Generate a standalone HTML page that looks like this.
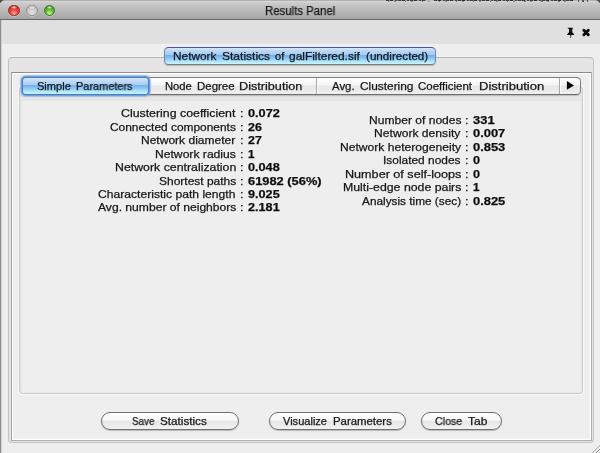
<!DOCTYPE html>
<html><head><meta charset="utf-8"><title>Results Panel</title>
<style>
html,body{margin:0;padding:0;}
body{width:600px;height:453px;position:relative;overflow:hidden;background:#eeeeee;font-family:"Liberation Sans",sans-serif;font-size:11px;color:#111;}
.a{position:absolute;}
.t{position:absolute;height:20px;line-height:20px;white-space:nowrap;transform-origin:0 0;will-change:transform;color:#151515;-webkit-text-stroke:0.25px #1a1a1a;}
.b{font-weight:bold;color:#0a0a0a;}
#bg0{left:0;top:0;width:600px;height:3px;background:#4a4a4a;}
#dash{left:386px;top:0;width:188px;height:1.3px;background:repeating-linear-gradient(90deg,#3c3c3c 0,#3c3c3c 3px,#8a8a8a 3px,#8a8a8a 4px,#2e2e2e 4px,#2e2e2e 7.5px,#a0a0a0 7.5px,#a0a0a0 9px,#444 9px,#444 11px,#909090 11px,#909090 12px);}
#dash2{left:388px;top:1.2px;width:184px;height:1px;background:repeating-linear-gradient(90deg,rgba(40,40,40,0.55) 0,rgba(40,40,40,0.55) 1.5px,transparent 1.5px,transparent 6px,rgba(40,40,40,0.4) 6px,rgba(40,40,40,0.4) 8px,transparent 8px,transparent 17px);}
#dots{left:578px;top:0;width:12px;height:1.5px;background:repeating-linear-gradient(90deg,#555 0,#555 1.5px,transparent 1.5px,transparent 4.5px);}
#dashgap{left:426px;top:0;width:8px;height:1.3px;background:#bcbcbc;}
#title{left:0;top:0;width:600px;height:20px;box-sizing:border-box;border-radius:5px 5px 0 0;background:linear-gradient(#d8d8d8 0%,#cccccc 10%,#c2c2c2 30%,#b0b0b0 72%,#a6a6a6 100%);border-bottom:1px solid #686868;border-top:1px solid #b2b2b2;}
#band{left:0;top:20px;width:600px;height:24px;background:#e0e0e0;}
#edgeL{left:0;top:20px;width:1px;height:433px;background:#8e8e8e;}
#edgeL2{left:1px;top:20px;width:1px;height:433px;background:#d0d0d0;}
.light{position:absolute;top:4.7px;width:11.7px;height:11.7px;border-radius:50%;box-sizing:border-box;box-shadow:0 0.5px 0.5px rgba(255,255,255,0.5);}
#outer{left:7.8px;top:57.2px;width:586px;height:386.1px;border:1px solid #c4c4c4;border-top:1.8px solid #b4b4b4;border-radius:4px;box-sizing:border-box;background:#e5e5e5;box-shadow:0 -0.8px 0 rgba(255,255,255,0.5);}
#second{left:10.6px;top:72px;width:581.8px;height:368.9px;border:1.1px solid #aeaeae;border-top-color:#8e8e8e;border-left-color:#a6a6a6;box-sizing:border-box;background:#eeeeee;box-shadow:inset 0 0 0 1.2px #fff;}
#content{left:19px;top:86px;width:564px;height:308px;border:1px solid #cbcbcb;border-radius:3.5px;box-sizing:border-box;background:#e6e6e6;box-shadow:0 0 0 1px #f8f8f8;}
#cband{left:21.7px;top:101px;width:559.3px;height:291.3px;background:#eeeeee;border-radius:1px;}
#nettitle{left:164.2px;top:47px;width:271.5px;height:18px;border:1px solid #7486a8;border-top-color:#4c52a8;border-bottom-color:#7c7c7c;border-radius:4.5px;box-sizing:border-box;background:linear-gradient(#d6e6fa 0%,#b8d4f5 22%,#a6ccf3 41%,#6eb0ec 45%,#86c2f2 62%,#b0e4fb 84%,#c8f6ff 100%);box-shadow:0 1px 1px rgba(0,0,0,0.22);}
.tab{position:absolute;top:77px;height:18px;box-sizing:border-box;border-top:1px solid #7d7d7d;border-bottom:1px solid #6e6e6e;background:linear-gradient(#ffffff 0%,#f4f4f4 45%,#e6e6e6 50%,#efefef 100%);box-shadow:0 1px 1px rgba(0,0,0,0.18);}
#tabsel{left:22.8px;top:78.2px;width:125.4px;height:15.6px;border-radius:3px;box-sizing:border-box;background:linear-gradient(#d6e6fa 0%,#bcd8f6 22%,#aacef3 41%,#72b2ec 45%,#88c4f2 62%,#b0e4fb 84%,#c4f4ff 100%);box-shadow:0 0 0 1px #467cc8,0 0 0 2px #70a0da,0 0 1px 2.6px rgba(125,168,224,0.65);}
.btn{position:absolute;top:411.5px;height:18.5px;box-sizing:border-box;border:1px solid #6f6f6f;border-radius:9.5px;background:linear-gradient(#ffffff 0%,#f6f6f6 45%,#e6e6e6 52%,#f2f2f2 100%);box-shadow:0 1px 1px rgba(0,0,0,0.22);}
</style></head><body>
<div id="bg0" class="a"></div>
<div id="band" class="a"></div>
<div id="title" class="a"></div>
<div id="dash" class="a"></div><div id="dash2" class="a"></div><div id="dots" class="a"></div><div id="dashgap" class="a"></div>
<div class="light" style="left:8.2px;background:radial-gradient(ellipse 32% 18% at 50% 16%,rgba(255,255,255,0.85) 0%,rgba(255,255,255,0) 100%),radial-gradient(circle at 50% 82%,#ffa49c 0%,#ee4640 42%,#b82620 100%);border:0.5px solid #8e2a26;"></div>
<div class="light" style="left:25.9px;background:radial-gradient(ellipse 32% 18% at 50% 16%,rgba(255,255,255,0.6) 0%,rgba(255,255,255,0) 100%),radial-gradient(circle at 50% 80%,#e2e2e2 0%,#cccccc 50%,#b0b0b0 100%);border:0.6px solid #909090;"></div>
<div class="light" style="left:43.8px;background:radial-gradient(ellipse 32% 18% at 50% 16%,rgba(255,255,255,0.85) 0%,rgba(255,255,255,0) 100%),radial-gradient(circle at 50% 82%,#ccf48c 0%,#68bc3c 42%,#33821a 100%);border:0.5px solid #3a7a22;"></div>
<div id="edgeL" class="a"></div><div id="edgeL2" class="a"></div>
<svg class="a" style="left:564px;top:26px" width="30" height="14" viewBox="0 0 30 14">
<path d="M3.8 1.7h5.1v1.1h-0.6v3.4l1.8 2.1v0.6h-2.9v2.5l-0.4 0.6-0.4-0.6v-2.5h-3.2v-0.6l1.8-2.1v-3.4h-1.2z" fill="#0c0c0c"/>
<path d="M6.2 3.2v2.8" stroke="#5a5a5a" stroke-width="0.5"/>
<path d="M19.8 4.3l4.5 4.5M24.3 4.3l-4.5 4.5" stroke="#060606" stroke-width="2.9" stroke-linecap="round" fill="none"/>
</svg>
<div id="outer" class="a"></div>
<div id="second" class="a"></div>
<div id="content" class="a"></div><div id="cband" class="a"></div>
<div id="nettitle" class="a"></div>
<div class="tab" style="left:148px;width:168px;"></div>
<div class="tab" style="left:316px;width:243px;"></div>
<div class="tab" style="left:559px;width:22px;border-right:1px solid #7d7d7d;border-radius:0 4.5px 4.5px 0;"></div>
<div class="a" style="left:315.8px;top:78px;width:1px;height:16px;background:#acacac;box-shadow:1px 0 0 rgba(255,255,255,0.8);"></div>
<div class="a" style="left:559px;top:78px;width:1px;height:16px;background:#acacac;box-shadow:1px 0 0 rgba(255,255,255,0.8);"></div>
<svg class="a" style="left:565px;top:80px" width="12" height="11" viewBox="0 0 12 11"><path d="M1.9 1L9 5.4 1.9 9.8z" fill="#060606"/></svg>
<div id="tabsel" class="a"></div>
<div class="btn" style="left:101px;width:138px;"></div>
<div class="btn" style="left:268.5px;width:137.5px;"></div>
<div class="btn" style="left:420.5px;width:81px;"></div>
<svg class="a" style="left:587px;top:440px" width="14" height="14" viewBox="0 0 14 14"><path d="M4.5 14L14 4.5M8 14L14 8M11.5 14L14 11.5" stroke="#8a8a8a" stroke-width="1" fill="none"/><path d="M5.5 14L14 5.5M9 14L14 9M12.5 14L14 12.5" stroke="#fafafa" stroke-width="0.8" fill="none"/></svg>
<div class="t" style="left:121.45px;top:103.30px;transform:scaleX(1.1218)">Clustering coefficient</div>
<div class="t" style="left:240.20px;top:103.30px;transform:scaleX(1.1500)">:</div>
<div class="t b" style="left:248.20px;top:103.30px;transform:scaleX(1.1553)">0.072</div>
<div class="t" style="left:110.20px;top:116.75px;transform:scaleX(1.0831)">Connected components</div>
<div class="t" style="left:240.20px;top:116.75px;transform:scaleX(1.1500)">:</div>
<div class="t b" style="left:248.20px;top:116.75px;transform:scaleX(1.1241)">26</div>
<div class="t" style="left:141.35px;top:130.20px;transform:scaleX(1.0934)">Network diameter</div>
<div class="t" style="left:240.20px;top:130.20px;transform:scaleX(1.1500)">:</div>
<div class="t b" style="left:248.20px;top:130.20px;transform:scaleX(1.1274)">27</div>
<div class="t" style="left:154.84px;top:143.65px;transform:scaleX(1.1024)">Network radius</div>
<div class="t" style="left:240.20px;top:143.65px;transform:scaleX(1.1500)">:</div>
<div class="t b" style="left:248.20px;top:143.65px;transform:scaleX(1.0654)">1</div>
<div class="t" style="left:115.08px;top:157.10px;transform:scaleX(1.1210)">Network centralization</div>
<div class="t" style="left:240.20px;top:157.10px;transform:scaleX(1.1500)">:</div>
<div class="t b" style="left:248.20px;top:157.10px;transform:scaleX(1.1515)">0.048</div>
<div class="t" style="left:158.82px;top:170.55px;transform:scaleX(1.0893)">Shortest paths</div>
<div class="t" style="left:240.20px;top:170.55px;transform:scaleX(1.1500)">:</div>
<div class="t b" style="left:248.20px;top:170.55px;transform:scaleX(1.1686)">61982 (56%)</div>
<div class="t" style="left:98.45px;top:184.00px;transform:scaleX(1.1020)">Characteristic path length</div>
<div class="t" style="left:240.20px;top:184.00px;transform:scaleX(1.1500)">:</div>
<div class="t b" style="left:248.20px;top:184.00px;transform:scaleX(1.1515)">9.025</div>
<div class="t" style="left:97.73px;top:197.45px;transform:scaleX(1.1005)">Avg. number of neighbors</div>
<div class="t" style="left:240.20px;top:197.45px;transform:scaleX(1.1500)">:</div>
<div class="t b" style="left:248.20px;top:197.45px;transform:scaleX(1.1506)">2.181</div>
<div class="t" style="left:368.85px;top:109.90px;transform:scaleX(1.0971)">Number of nodes</div>
<div class="t" style="left:465.20px;top:109.90px;transform:scaleX(1.1500)">:</div>
<div class="t b" style="left:473.20px;top:109.90px;transform:scaleX(1.1759)">331</div>
<div class="t" style="left:374.34px;top:123.35px;transform:scaleX(1.1031)">Network density</div>
<div class="t" style="left:465.20px;top:123.35px;transform:scaleX(1.1500)">:</div>
<div class="t b" style="left:473.20px;top:123.35px;transform:scaleX(1.1733)">0.007</div>
<div class="t" style="left:339.84px;top:136.80px;transform:scaleX(1.1006)">Network heterogeneity</div>
<div class="t" style="left:465.20px;top:136.80px;transform:scaleX(1.1500)">:</div>
<div class="t b" style="left:473.20px;top:136.80px;transform:scaleX(1.1733)">0.853</div>
<div class="t" style="left:383.49px;top:150.25px;transform:scaleX(1.0829)">Isolated nodes</div>
<div class="t" style="left:465.20px;top:150.25px;transform:scaleX(1.1500)">:</div>
<div class="t b" style="left:473.20px;top:150.25px;transform:scaleX(1.1494)">0</div>
<div class="t" style="left:344.80px;top:163.70px;transform:scaleX(1.1463)">Number of self-loops</div>
<div class="t" style="left:465.20px;top:163.70px;transform:scaleX(1.1500)">:</div>
<div class="t b" style="left:473.20px;top:163.70px;transform:scaleX(1.1494)">0</div>
<div class="t" style="left:343.08px;top:177.15px;transform:scaleX(1.1190)">Multi-edge node pairs</div>
<div class="t" style="left:465.20px;top:177.15px;transform:scaleX(1.1500)">:</div>
<div class="t b" style="left:473.20px;top:177.15px;transform:scaleX(1.0654)">1</div>
<div class="t" style="left:362.23px;top:190.60px;transform:scaleX(1.0739)">Analysis time (sec)</div>
<div class="t" style="left:465.20px;top:190.60px;transform:scaleX(1.1500)">:</div>
<div class="t b" style="left:473.20px;top:190.60px;transform:scaleX(1.1733)">0.825</div>
<div class="t" style="left:265.15px;top:0.90px;font-size:12px;transform:scaleX(0.9492)">Results Panel</div>
<div class="t" style="left:173.08px;top:45.60px;transform:scaleX(1.0766)">Network</div>
<div class="t" style="left:221.71px;top:45.60px;transform:scaleX(1.0925)">Statistics</div>
<div class="t" style="left:274.90px;top:45.60px;transform:scaleX(1.0019)">of</div>
<div class="t" style="left:288.70px;top:45.60px;transform:scaleX(1.0830)">galFiltered.sif</div>
<div class="t" style="left:366.10px;top:45.60px;transform:scaleX(1.0605)">(undirected)</div>
<div class="t" style="left:36.56px;top:75.50px;transform:scaleX(1.0048)">Simple</div>
<div class="t" style="left:75.89px;top:75.50px;transform:scaleX(0.9925)">Parameters</div>
<div class="t" style="left:165.46px;top:75.50px;transform:scaleX(1.0192)">Node</div>
<div class="t" style="left:196.53px;top:75.50px;transform:scaleX(1.0407)">Degree</div>
<div class="t" style="left:238.70px;top:75.50px;transform:scaleX(1.1501)">Distribution</div>
<div class="t" style="left:332.23px;top:75.50px;transform:scaleX(1.0354)">Avg.</div>
<div class="t" style="left:359.80px;top:75.50px;transform:scaleX(1.0793)">Clustering</div>
<div class="t" style="left:418.30px;top:75.50px;transform:scaleX(1.0432)">Coefficient</div>
<div class="t" style="left:478.88px;top:75.50px;transform:scaleX(1.1850)">Distribution</div>
<div class="t" style="left:131.57px;top:410.50px;transform:scaleX(0.8948)">Save</div>
<div class="t" style="left:159.64px;top:410.50px;transform:scaleX(1.0632)">Statistics</div>
<div class="t" style="left:283.22px;top:410.50px;transform:scaleX(1.0040)">Visualize</div>
<div class="t" style="left:332.74px;top:410.50px;transform:scaleX(1.0349)">Parameters</div>
<div class="t" style="left:435.00px;top:410.50px;transform:scaleX(0.9664)">Close</div>
<div class="t" style="left:467.70px;top:410.50px;transform:scaleX(1.0878)">Tab</div>
</body></html>
